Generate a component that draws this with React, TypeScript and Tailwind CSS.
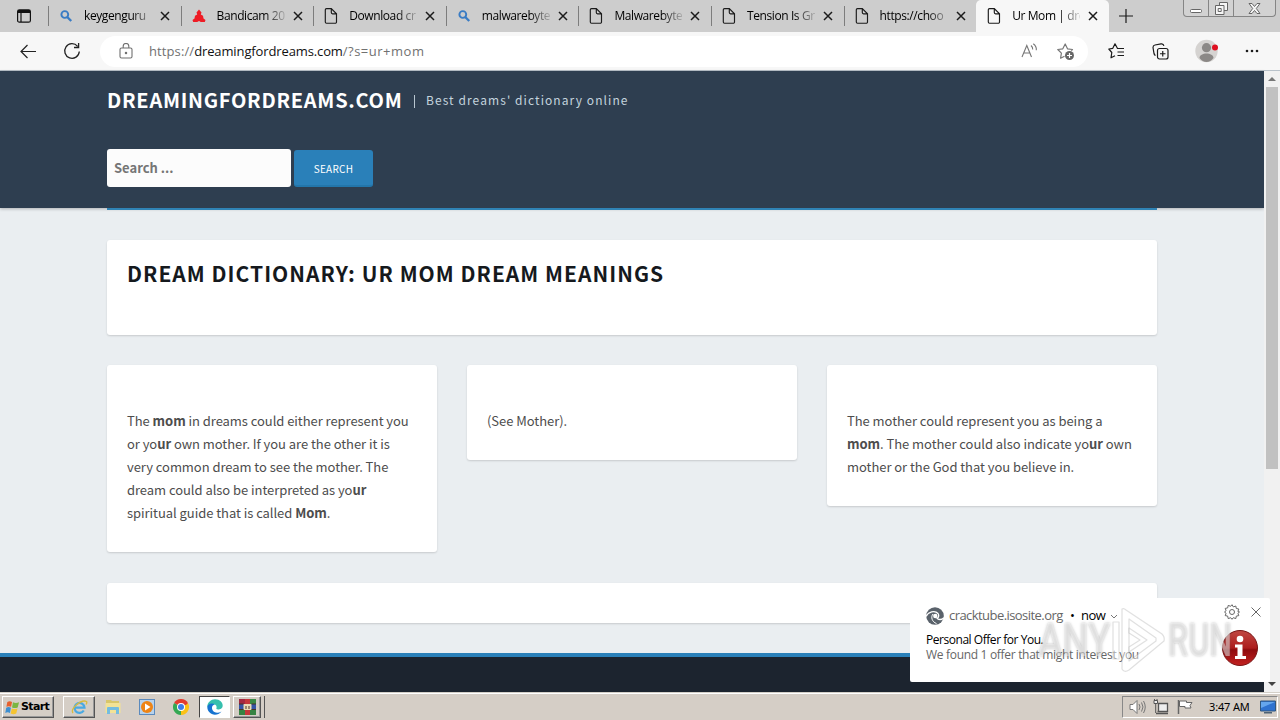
import type { ReactNode } from "react";

const UI_FONT = "font-['Open_Sans','Noto_Sans',sans-serif]";
const PAGE_FONT = "font-['Noto_Sans_CJK_SC',sans-serif]";

type TabIcon = "search" | "bandicam" | "page";

const TABS: { icon: TabIcon; title: string; active?: boolean }[] = [
  { icon: "search", title: "keygenguru" },
  { icon: "bandicam", title: "Bandicam 20" },
  { icon: "page", title: "Download cr" },
  { icon: "search", title: "malwarebyte" },
  { icon: "page", title: "Malwarebyte" },
  { icon: "page", title: "Tension Is Gr" },
  { icon: "page", title: "https://choo" },
  { icon: "page", title: "Ur Mom | dre", active: true },
];

function Favicon({ icon }: { icon: TabIcon }) {
  if (icon === "search") {
    return (
      <svg width="16" height="16" viewBox="0 0 16 16" fill="none" stroke="#3a7cc4">
        <circle cx="6.8" cy="6.5" r="3.4" strokeWidth="1.9" />
        <path d="M9.2 9l4 4" strokeWidth="2.4" />
      </svg>
    );
  }
  if (icon === "bandicam") {
    return (
      <svg width="16" height="16" viewBox="0 0 16 16" fill="#ee1c25">
        <path d="M8 1.500l2.500 3-.7 2 2.200 1.300.5 2.700 2 1.500-.7 2H9.800L8 13l-1.800 1H2.200l-.7-2 2-1.500.5-2.700 2.200-1.300-.7-2z" />
      </svg>
    );
  }
  return (
    <svg width="16" height="16" viewBox="0 0 16 16" fill="none" stroke="#1b1b1b" strokeWidth="1.15">
      <path d="M3.500 .6h4.800l5.200 5.200v8.200a1.200 1.200 0 0 1-1.200 1.200H3.500A1.200 1.200 0 0 1 2.300 14V1.800A1.200 1.200 0 0 1 3.500.6zM8.300.6v4a1.200 1.200 0 0 0 1.200 1.200h4" />
    </svg>
  );
}

function TabBar() {
  return (
    <div className={`flex h-8 bg-[#cdcdcd] ${UI_FONT}`}>
      <div className="flex w-12 shrink-0 items-center justify-center">
        <svg width="14" height="14" viewBox="0 0 14 14" fill="none" stroke="#111" strokeWidth="1.2">
          <rect x=".6" y=".8" width="12.800" height="12.400" rx="1.800" />
          <path d="M1 2.500h12" strokeWidth="3" />
          <path d="M4 3v10" />
        </svg>
      </div>
      {TABS.map((tab) => (
        <div
          key={tab.title}
          className={`flex w-[132.6px] shrink-0 items-center pl-[10px] ${
            tab.active ? "rounded-t-[5px] bg-[#f7f7f7]" : ""
          }`}
        >
          {!tab.active && <div className="-ml-[10px] mr-[9px] h-5 w-px bg-[#7d7d7d]" />}
          <Favicon icon={tab.icon} />
          <div className="ml-[10px] w-[68px] whitespace-nowrap bg-linear-to-r from-black from-70% to-black/15 bg-clip-text text-[12px] leading-[18px] tracking-[-0.4px] text-transparent">
            {tab.title}
          </div>
          <svg className="ml-[8px]" width="10" height="10" viewBox="0 0 10 10" stroke="#1b1b1b" strokeWidth="1.500">
            <path d="M1 1l8 8M9 1L1 9" />
          </svg>
        </div>
      ))}
      <div className="flex w-[34px] items-center justify-center">
        <svg width="14" height="14" viewBox="0 0 14 14" stroke="#1b1b1b" strokeWidth="1.200">
          <path d="M7 0v14M0 7h14" />
        </svg>
      </div>
      <div className="ml-auto mr-[4px] flex h-[17px] w-[93px] divide-x divide-[#858585] rounded-b-[4px] border border-t-0 border-[#858585] bg-[#d2d2d2]">
        <div className="flex w-[25px] items-center justify-center">
          <svg className="mt-[5px]" width="12" height="4" viewBox="0 0 12 4" fill="#fff" stroke="#666">
            <rect x=".5" y=".5" width="11" height="3" rx="1" />
          </svg>
        </div>
        <div className="flex w-[25px] items-center justify-center">
          <svg width="13" height="13" viewBox="0 0 13 13" fill="#f5f5f5" stroke="#666">
            <path d="M4.500.500h8v8h-8z" />
            <path d="M.500 3.500h8.500v9H.500z" />
            <path d="M3.200 6.500h3v3h-3z" />
          </svg>
        </div>
        <div className="flex flex-1 items-center justify-center">
          <svg width="13" height="11" viewBox="0 0 13 11" fill="#f5f5f5" stroke="#666">
            <path d="M1 .5h3l2.500 3 2.500-3h3L8.300 5.500l3.700 5H9L6.500 7.500 4 10.500H1l3.700-5z" />
          </svg>
        </div>
      </div>
    </div>
  );
}

function AddressBar() {
  return (
    <div className={`flex h-[39px] items-center border-b border-[#b9c2ca] bg-[#f7f7f7] ${UI_FONT}`}>
      <svg className="ml-5 shrink-0" width="17" height="15" viewBox="0 0 17 15" fill="none" stroke="#222" strokeWidth="1.200">
        <path d="M16 7.500H1M7.500 1L1 7.500 7.500 14" />
      </svg>
      <svg className="ml-[26px] shrink-0" width="18" height="18" viewBox="0 0 18 18" fill="none" stroke="#222" strokeWidth="1.300">
        <path d="M16.300 9.500A7.300 7.300 0 1 1 14.600 4.300M15.600 1v4.500H11" />
      </svg>
      <div className="ml-[19px] flex h-[31px] w-[988px] shrink-0 items-center rounded-full bg-white">
        <svg className="ml-[19px]" width="14" height="16" viewBox="0 0 14 16" fill="none" stroke="#707070" strokeWidth="1.100">
          <rect x="1" y="5" width="12" height="10" rx="1.500" />
          <path d="M4.200 5V3.300a2.800 2.800 0 0 1 5.600 0V5" />
          <circle cx="7" cy="10" r=".7" fill="#707070" />
        </svg>
        <div className="ml-[16px] mt-[2px] whitespace-nowrap text-[13px] text-[#717171]">
          <span className="tracking-[0.1px]">https://</span>
          <span className="tracking-[-0.12px] text-[#111]">dreamingfordreams.com</span>
          <span className="tracking-[0.5px]">/?s=ur+mom</span>
        </div>
        <svg className="ml-auto" width="17" height="16" viewBox="0 0 17 16" fill="none" stroke="#777" strokeWidth="1.100">
          <path d="M1 14L5.800 2.500 10.500 14M2.700 10h6.200M10 2.500q2 1.700 1.700 4M12.300.700q3.500 2.700 3 6.500" />
        </svg>
        <svg className="ml-[19px] mr-[12px]" width="19" height="19" viewBox="0 0 19 19" fill="none" stroke="#777" strokeWidth="1.200">
          <path d="M7.500 14.200l-3.900 2 .8-5.100L.800 7.500l5-.7L8.200 2l2.300 4.800 5 .7-1.200 1.200" strokeLinejoin="round" />
          <circle cx="12.500" cy="13.500" r="4.500" fill="#666" stroke="none" />
          <path d="M12.500 11v5M10 13.500h5" stroke="#fff" />
        </svg>
      </div>
      <svg className="ml-5 shrink-0" width="17" height="16" viewBox="0 0 17 16" fill="none" stroke="#1b1b1b" strokeWidth="1.200">
        <path d="M16 5.500H9.500L7 .800 4.800 5.300.800 6l3 3.500-.8 5.300 4-2M9.500 9H16M9.500 12.500H16" strokeLinejoin="round" />
      </svg>
      <svg className="ml-[27px] shrink-0" width="17" height="17" viewBox="0 0 17 17" fill="none" stroke="#1b1b1b" strokeWidth="1.200">
        <rect x="5.500" y="5.500" width="10.500" height="10.500" rx="2" />
        <path d="M10.750 8v5.500M8 10.750h5.500M3.500 12.500A3 3 0 0 1 2 10.500L1 4.500A2.500 2.500 0 0 1 3 2l6-1.100a2.500 2.500 0 0 1 2.900 2" />
      </svg>
      <svg className="ml-[26px] shrink-0" width="24" height="24" viewBox="0 0 24 24">
        <circle cx="11.500" cy="12" r="11.200" fill="#d5d3d1" />
        <circle cx="11.500" cy="8.700" r="4.600" fill="#8b8886" />
        <path d="M4.500 19c0-6 14-6 14 0q-3 4-7 4t-7-4z" fill="#8b8886" />
        <circle cx="20" cy="8.500" r="3" fill="#df1020" />
      </svg>
      <svg className="ml-[26px] shrink-0" width="14" height="4" viewBox="0 0 14 4" fill="#1b1b1b">
        <circle cx="2" cy="2" r="1.300" />
        <circle cx="7" cy="2" r="1.300" />
        <circle cx="12" cy="2" r="1.300" />
      </svg>
    </div>
  );
}

function Card({ className, children }: { className: string; children?: ReactNode }) {
  return (
    <div className={`rounded-[3px] bg-white shadow-[0_1px_2px_rgba(0,0,0,0.15)] ${className}`}>
      {children}
    </div>
  );
}

function DreamPage() {
  return (
    <div className={`flex min-w-0 flex-1 flex-col bg-[#eaeef1] text-[#4d4d4d] ${PAGE_FONT}`}>
      <header className="h-[137px] shrink-0 bg-[#2e3e50] pl-[107px] shadow-[0_1px_3px_rgba(0,0,0,0.25)]">
        <div className="flex h-[78px] whitespace-nowrap pt-[14px] leading-[30px]">
          <h1 className="w-[307px] text-[20px] font-bold tracking-[0.72px] text-white">DREAMINGFORDREAMS.COM</h1>
          <div className="mt-[10px] h-[13px] w-px bg-[#b8c6d0]" />
          <p className="ml-[11px] text-[12px] tracking-[1.08px] text-[#c4d4de]">Best dreams' dictionary online</p>
        </div>
        <div className="flex items-start">
          <div className="h-[38px] w-[184px] rounded-[3px] bg-[#fcfcfc] pl-[7px] text-[13px] font-bold leading-[38px] text-[#757575]">
            Search ...
          </div>
          <button className="ml-[3px] mt-px h-[37px] w-[79px] rounded-[3px] border-b-2 border-[#2376ab] bg-[#2a80b9] text-[10px] leading-[37px] tracking-[0.3px] text-white">
            SEARCH
          </button>
        </div>
      </header>
      <main className="mx-[107px] h-[445px] shrink-0 border-t-2 border-[#2f83b5] pt-[30px]">
        <Card className="h-[95px] pl-5 pt-[17px]">
          <h2 className="whitespace-nowrap text-[21px] font-bold leading-[32px] tracking-[1.03px] text-[#15191d]">
            DREAM DICTIONARY: UR MOM DREAM MEANINGS
          </h2>
        </Card>
        <div className="mt-[30px] grid h-[188px] grid-cols-3 items-start gap-[30px] whitespace-nowrap text-[13px] leading-[23px] tracking-[-0.05px]">
          <Card className="h-[187px] pl-5 pt-[44px]">
            <p>The <b>mom</b> in dreams could either represent you</p>
            <p>or yo<b>ur</b> own mother. If you are the other it is</p>
            <p>very common dream to see the mother. The</p>
            <p>dream could also be interpreted as yo<b>ur</b></p>
            <p>spiritual guide that is called <b>Mom</b>.</p>
          </Card>
          <Card className="h-[95px] pl-5 pt-[44px]">
            <p>(See Mother).</p>
          </Card>
          <Card className="h-[141px] pl-5 pt-[44px]">
            <p>The mother could represent you as being a</p>
            <p><b>mom</b>. The mother could also indicate yo<b>ur</b> own</p>
            <p>mother or the God that you believe in.</p>
          </Card>
        </div>
        <Card className="mt-[30px] h-[40px]" />
      </main>
      <footer className="flex-1 border-t-4 border-[#2a80b9] bg-[#1c242f]" />
    </div>
  );
}

function Scrollbar() {
  return (
    <div className="flex w-4 shrink-0 flex-col items-center bg-[#f1f1f1]">
      <svg className="my-[5px]" width="8" height="5" viewBox="0 0 8 5" fill="#777">
        <path d="M0 5l4-4 4 4z" />
      </svg>
      <div className="mt-px h-[382px] w-3 bg-[#c1c1c1]" />
      <svg className="mb-[5px] mt-auto" width="8" height="5" viewBox="0 0 8 5" fill="#444">
        <path d="M0 0l4 4 4-4z" />
      </svg>
    </div>
  );
}

function Notification() {
  return (
    <div className={`absolute left-[910px] top-[598px] h-[84px] w-[360px] rounded-[2px] bg-white ${UI_FONT}`}>
      <div className="flex h-[34px] items-center whitespace-nowrap pl-4 pt-[2px] text-[13px] text-[#666]">
        <svg width="18" height="18" viewBox="0 0 18 18">
          <circle cx="9" cy="9" r="8.800" fill="#5a626b" />
          <path d="M0 9.500C2 4.500 9 3 12 6.500c1.500 2.200.3 4-.8 5 2 1.500 5 .8 6.800-.7" fill="none" stroke="#fff" strokeWidth="1.300" />
          <path d="M7 7c-2.500 3-1 8 3.500 9.500" fill="none" stroke="#fff" strokeWidth="1" />
          <circle cx="9.300" cy="9" r="2.200" fill="#fff" />
        </svg>
        <span className="ml-[5px] w-[121px] tracking-[-0.56px]">cracktube.isosite.org</span>
        <span className="w-[11px] text-black">•</span>
        <span className="w-[29px] text-black tracking-[-0.5px]">now</span>
        <svg width="8" height="5" viewBox="0 0 8 5" fill="none" stroke="#777">
          <path d="M1 1l3 3 3-3" />
        </svg>
        <svg className="-mt-[8px] ml-auto" width="16" height="16" viewBox="0 0 16 16" fill="none" stroke="#666">
          <path d="M8 .700l1.300 2.200 2.500-.9.500 2.500 2.500.5-.9 2.500L15.500 8l-1.600 1.300.9 2.300-2.500.5-.5 2.500-2.500-.9L8 15.300l-1.300-1.600-2.500.9-.5-2.500-2.500-.5.900-2.300L.500 8l1.600-1.300-.9-2.300 2.500-.5.500-2.500 2.500.9z" />
          <circle cx="8" cy="8" r="2.500" />
        </svg>
        <svg className="-mt-[8px] ml-[11px] mr-[9px]" width="10" height="10" viewBox="0 0 10 10" stroke="#666">
          <path d="M.5.500l9 9M9.500.500l-9 9" />
        </svg>
      </div>
      <div className="whitespace-nowrap pl-4 text-[12px] leading-[15px]">
        <p className="tracking-[-0.46px] text-black">Personal Offer for You.</p>
        <p className="tracking-[-0.31px] text-[#666]">We found 1 offer that might interest you</p>
      </div>
      <svg className="absolute left-[311px] top-[31px]" width="38" height="38" viewBox="0 0 38 38">
        <defs>
          <linearGradient id="badge" x1="0" y1="0" x2="0" y2="1">
            <stop offset="0" stopColor="#c04742" />
            <stop offset=".5" stopColor="#ad1d1d" />
            <stop offset=".55" stopColor="#8f0b0e" />
            <stop offset="1" stopColor="#c32220" />
          </linearGradient>
        </defs>
        <circle cx="19" cy="19" r="17.500" fill="url(#badge)" stroke="#781414" />
        <circle cx="19" cy="10" r="3.300" fill="#fff" />
        <path d="M14 15.500h7.500V27H25v3H14v-3h2.500v-8.500H14z" fill="#fff" />
      </svg>
    </div>
  );
}

function Watermark() {
  return (
    <div className="absolute left-[1038px] top-[606px] flex h-[68px] w-[200px] items-center font-['Roboto',sans-serif] text-[46px] font-medium leading-none text-white/45 [text-shadow:0_0_3px_rgba(90,90,90,0.38)]">
      <span className="w-[74px] origin-left scale-x-[0.8]">ANY</span>
      <svg
        className="shrink-0"
        width="54"
        height="68"
        viewBox="0 0 54 68"
        fill="#fff"
        fillOpacity=".45"
        stroke="#999"
        strokeOpacity=".3"
        strokeWidth="1.200"
        fillRule="evenodd"
        strokeLinejoin="round"
      >
        <path d="M1 16h6v37H1z" />
        <path d="M10 3q2-1 4 1l36 24q3 3 2 7L17 64q-5 3-7-1zM17 13v42l27-20v-3z" />
        <path d="M17 22l18 12-18 12v-5l11-7-11-7z" />
      </svg>
      <span className="ml-[2px] origin-left scale-x-[0.7]">RUN</span>
    </div>
  );
}

const RAISED = "border border-t-white border-l-white border-b-[#555] border-r-[#555] shadow-[inset_-1px_-1px_0_#999]";

function Taskbar() {
  return (
    <div className="flex h-7 shrink-0 border-t border-[#d4d0c8] bg-[#d5cec6]">
      <div className="flex flex-1 items-center border-t border-white pl-[2px]">
        <div className={`flex h-[22px] w-[52px] items-center pl-[2px] ${RAISED}`}>
          <svg width="15" height="15" viewBox="0 0 16 16">
            <path d="M2.500 2q2.500-1.500 5 0L6.500 7.300q-2.500-1.500-5 0z" fill="#e6602d" />
            <path d="M8.500 2.500q3 1.500 6.500 0L13.500 8q-3 1.300-6 0z" fill="#7bb642" />
            <path d="M1.300 8.300q2.500-1.500 5 0l-1 5.500q-2.500-1.500-5 0z" fill="#3d8fd1" />
            <path d="M7.300 9q3 1.300 6 0l-1.300 5.500q-3 1.300-6 0z" fill="#f5c431" />
          </svg>
          <span className="ml-px mt-px font-['DejaVu_Sans',sans-serif] text-[11px] font-bold tracking-[-0.65px] text-black">Start</span>
        </div>
        <div className={`ml-[9px] flex h-[22px] w-[32px] items-center justify-center ${RAISED}`}>
          <svg width="17" height="17" viewBox="0 0 17 17" fill="none">
            <path d="M12.800 11.500A5 5 0 1 1 13.500 8.700H4.500" stroke="#4aa9e2" strokeWidth="2.200" />
            <path d="M2 14C-1 10 10 0 15.500 2.500q.8 1-.5 3" stroke="#d9bb3d" strokeWidth="1.300" />
          </svg>
        </div>
        <svg className="ml-[10px]" width="16" height="16" viewBox="0 0 16 16">
          <path d="M1 3V1h5l1 1h7v3H1z" fill="#d8c66b" />
          <path d="M.500 4h15v10H.500z" fill="#f2e296" />
          <path d="M2 15V9q0-1 1-1h10q1 0 1 1v6h-3v-4H5v4z" fill="#74bce0" />
        </svg>
        <svg className="ml-[18px]" width="16" height="16" viewBox="0 0 16 16">
          <rect x=".500" y=".500" width="15" height="15" fill="#b7d2ec" stroke="#5b8abd" />
          <circle cx="8" cy="8" r="6" fill="#ee8415" />
          <path d="M6 4.500v7L11.500 8z" fill="#fff" />
        </svg>
        <svg className="ml-[18px]" width="16" height="16" viewBox="0 0 16 16">
          <path d="M8 8L1.070 4a8 8 0 0 1 13.860 0z" fill="#e33b2e" />
          <path d="M8 8L1.070 4A8 8 0 0 0 8 16z" fill="#34a853" />
          <path d="M8 8h0l6.930-4A8 8 0 0 1 8 16z" fill="#fbc116" />
          <path d="M8 4h6.930L13 6H8z" fill="#e33b2e" />
          <circle cx="8" cy="8" r="4" fill="#fff" />
          <circle cx="8" cy="8" r="3" fill="#3e7de8" />
        </svg>
        <div className="ml-[10px] flex h-[22px] w-[31px] items-center justify-center border border-b-white border-l-[#444] border-r-white border-t-[#444] bg-white">
          <svg width="16" height="16" viewBox="0 0 16 16">
            <path d="M.300 8C.300 3.500 4 .300 8 .300c5 0 7.700 3.200 7.700 6.200 0 3-2.700 4-4.500 4-2 0-2-.8-1.700-1.500C10.500 6 6 4 3 6.500z" fill="#36bfae" />
            <path d="M.300 8C1 4.500 5 3.500 8 5.500c-3 .5-3.500 3-2.500 5.500 1.500 3 5.500 3.500 9 1.500C12.500 15 10.500 15.700 8 15.700 3.500 15.700.300 12 .300 8z" fill="#1673d0" />
          </svg>
        </div>
        <div className={`ml-[3px] flex h-[22px] w-[28px] items-center justify-center ${RAISED}`}>
          <svg width="17" height="16" viewBox="0 0 17 16">
            <path d="M0 0h6v5H0z" fill="#a32842" />
            <path d="M11 0h6v5h-6z" fill="#3a8a45" />
            <path d="M0 5h17v5H0z" fill="#3655a5" />
            <path d="M0 10h17v6H0z" fill="#378343" />
            <path d="M6 0h5v16H6z" fill="#c5373b" />
            <path d="M4.500 5h8v6h-8z" fill="#eadbb7" />
            <path d="M7 7v3M10 7v3M0 5h4.500M12.500 5H17M0 10.500h4.500M12.500 10.500H17" stroke="#4b3327" />
          </svg>
        </div>
        <div className="h-[22px] w-[4px] border-r border-[#555]" />
        <div className="ml-auto mr-[2px] flex h-[22px] w-[156px] items-center border border-b-white border-l-[#888] border-r-white border-t-[#888] pl-[6px]">
          <svg width="17" height="16" viewBox="0 0 17 16" fill="#fff" stroke="#777">
            <path d="M1 5.500h3l4-4v13l-4-4H1z" />
            <path d="M10 5q2 3 0 6M12.500 3.500q3 4.500 0 9M14.500 2q3.500 6 0 12" fill="none" />
          </svg>
          <svg className="ml-[7px]" width="16" height="16" viewBox="0 0 16 16" fill="#eee" stroke="#555">
            <path d="M5.500 4.500h9v8h-9zM3 14.500h12M4.500 12.500h2" strokeWidth="1.300" />
            <path d="M1 1.500v3h3.500v-3zM1.500 0v1.500M4 0v1.500M2.700 4.500v9.500" />
          </svg>
          <svg className="ml-[8px]" width="16" height="16" viewBox="0 0 16 16" fill="#fff" stroke="#666">
            <path d="M1.500 1v14" strokeWidth="1.500" />
            <path d="M2.500 2h7v1.500h5.500l-2 3 1 2.500H8V7.500H2.500z" />
          </svg>
          <span className="ml-[16px] w-[51px] whitespace-nowrap font-['Noto_Sans',sans-serif] text-[11px] tracking-[-0.15px] text-black">3:47 AM</span>
          <svg width="16" height="14" viewBox="0 0 16 14">
            <path d="M.500 1h15v10H.500z" fill="#2f72cf" stroke="#31577e" />
            <path d="M1 2h14L1 8z" fill="#65a6ed" />
            <path d="M4 12h8v1.500H4z" fill="#4d6275" />
          </svg>
        </div>
      </div>
    </div>
  );
}

export default function App() {
  return (
    <div className="relative flex h-[720px] w-[1280px] flex-col overflow-hidden">
      <TabBar />
      <AddressBar />
      <div className="flex min-h-0 flex-1">
        <DreamPage />
        <Scrollbar />
      </div>
      <Taskbar />
      <Notification />
      <Watermark />
    </div>
  );
}
